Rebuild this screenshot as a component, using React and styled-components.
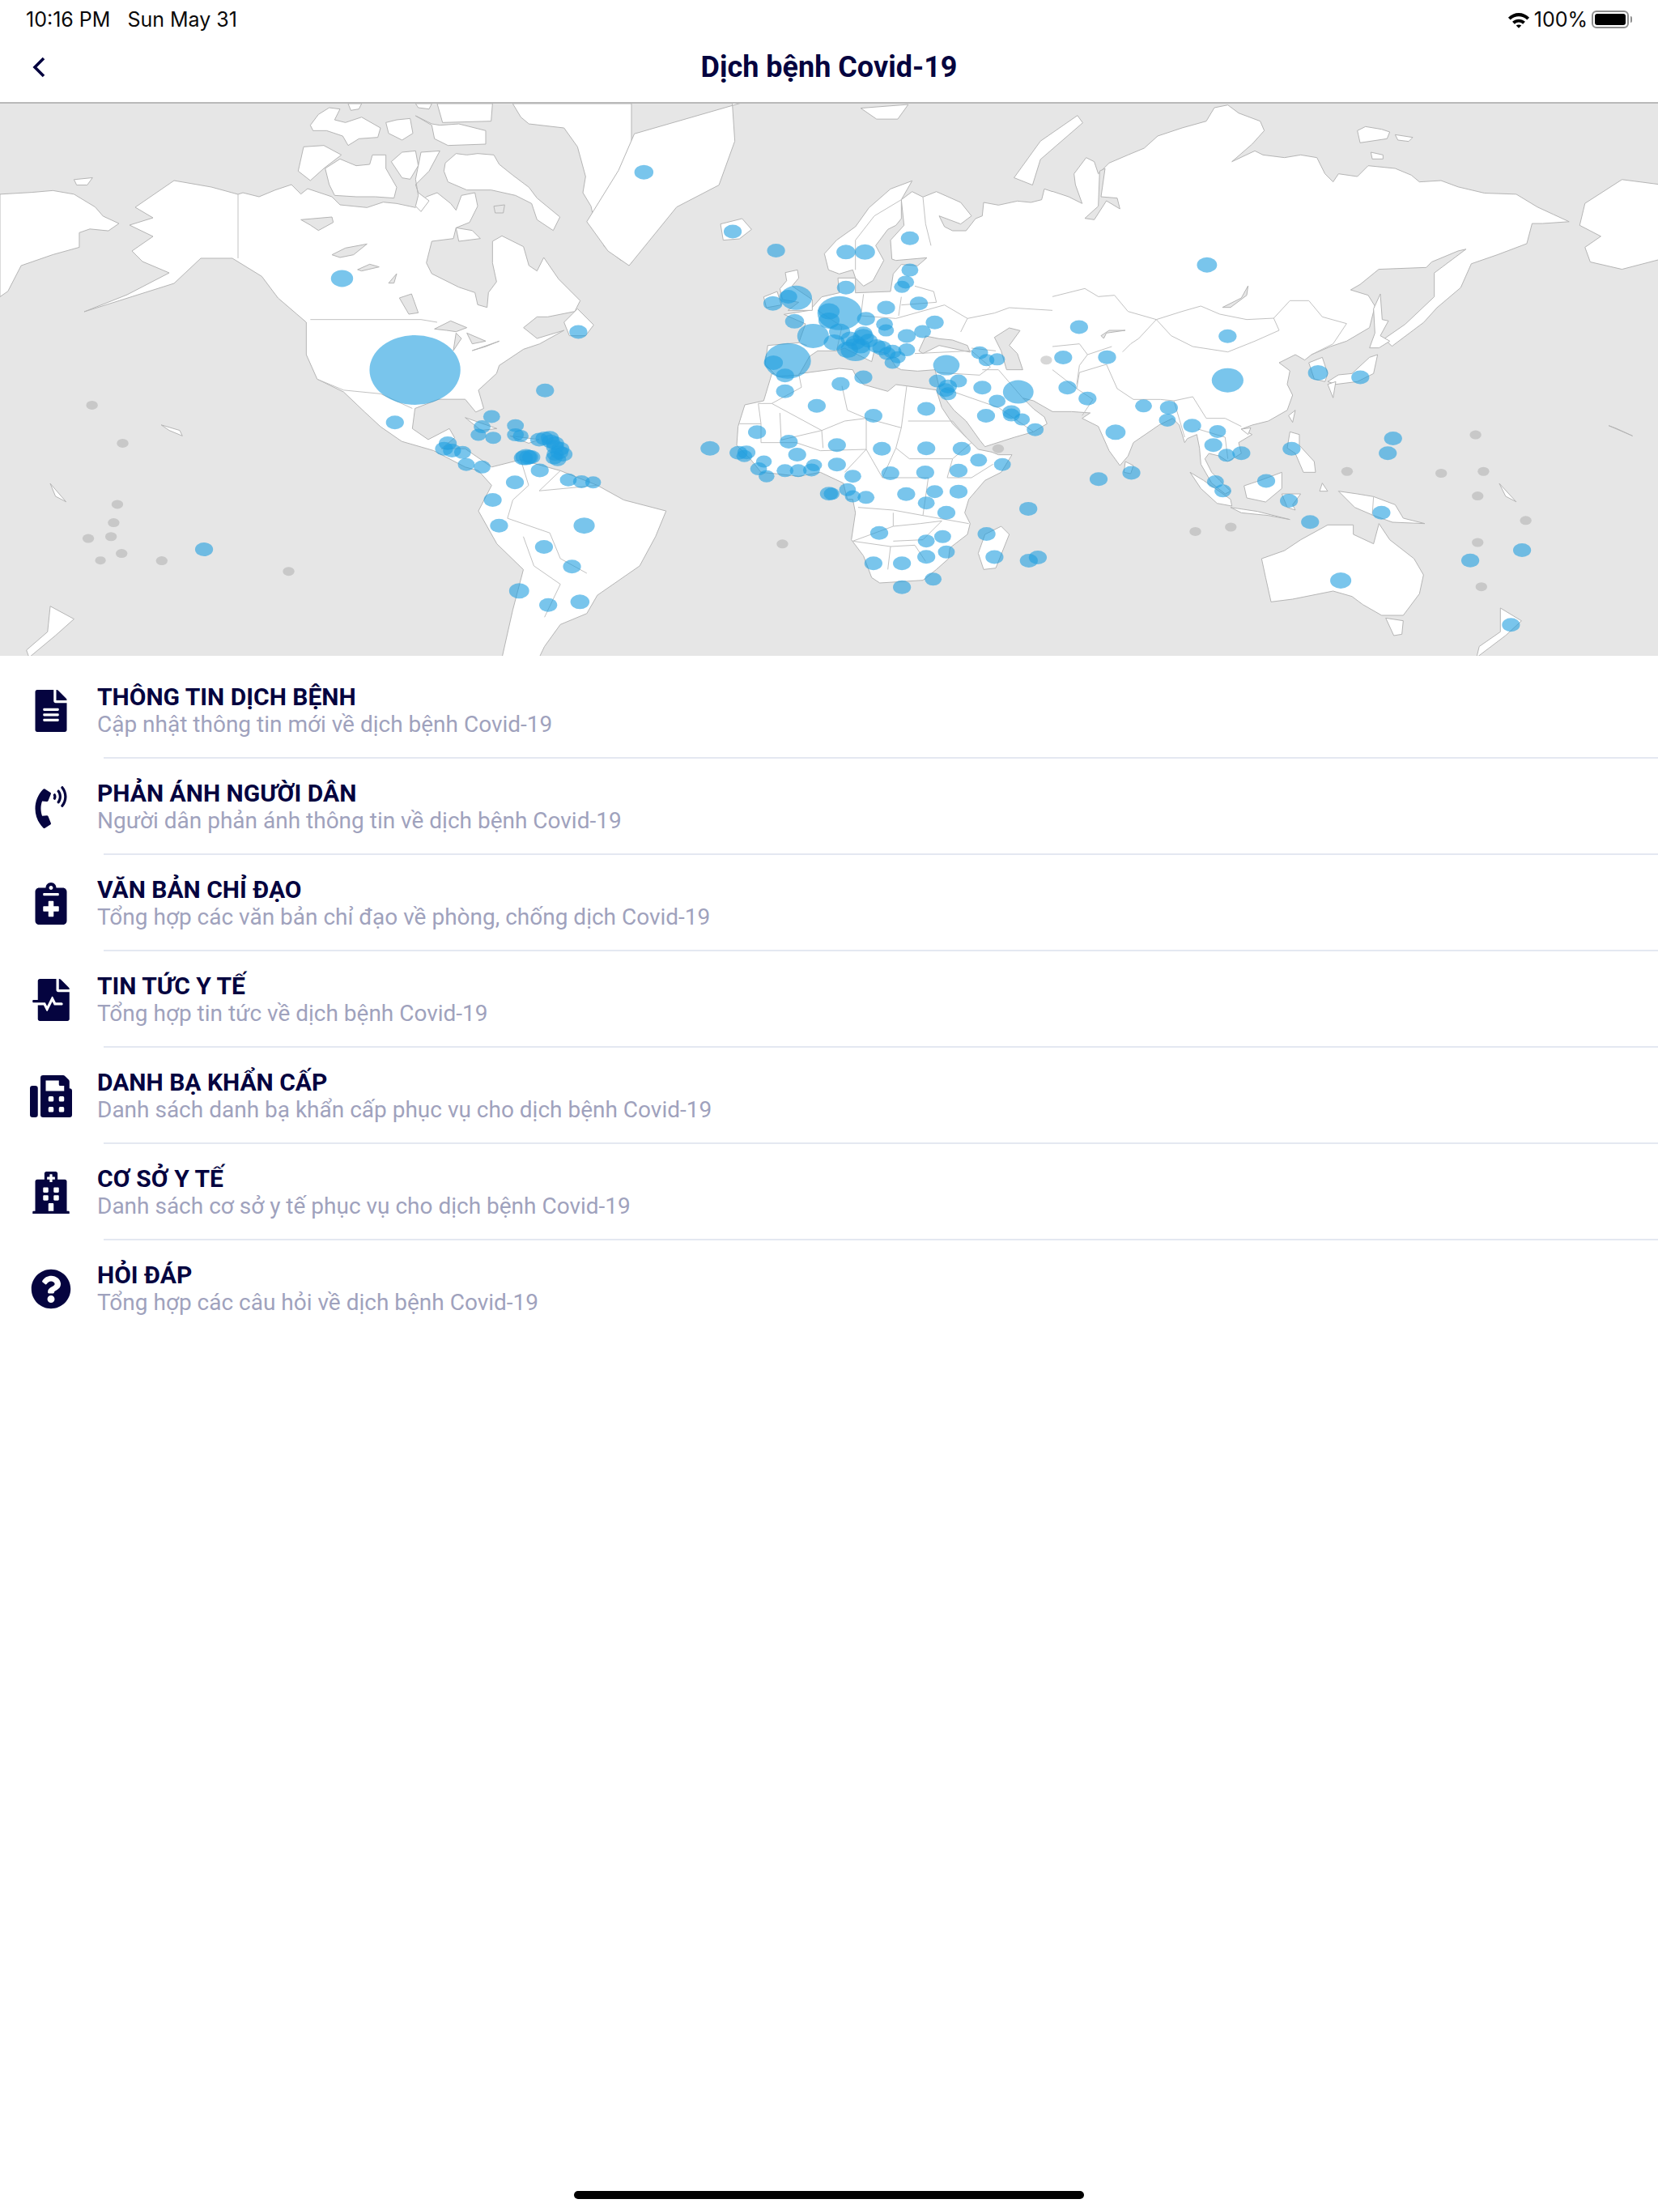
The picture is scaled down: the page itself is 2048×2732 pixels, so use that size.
import React from "react";
import styled, { createGlobalStyle } from "styled-components";
import {
  FaFileAlt,
  FaPhoneVolume,
  FaNotesMedical,
  FaFileMedicalAlt,
  FaFax,
  FaHospital,
  FaQuestionCircle,
} from "react-icons/fa";

const GlobalStyle = createGlobalStyle`
  html, body { margin: 0; padding: 0; background: #fff; }
`;

const Page = styled.div`
  width: 2048px;
  height: 2732px;
  display: flex;
  flex-direction: column;
  background: #fff;
  font-family: Roboto, "Noto Sans", sans-serif;
`;

const StatusBar = styled.div`
  height: 48px;
  padding: 0 36px 0 32px;
  display: flex;
  align-items: center;
  justify-content: space-between;
  font-family: Inter, "Liberation Sans", sans-serif;
  font-size: 25px;
  color: #0a0a0a;
`;

const StatusGroup = styled.div`
  display: flex;
  align-items: center;
  gap: ${(p) => p.$gap}px;
`;

const NavBar = styled.div`
  height: 70px;
  padding: 0 0 8px 40px;
  display: flex;
  align-items: center;
  position: relative;
  border-bottom: 2px solid #b9b9b9;
`;

const NavTitle = styled.div`
  position: absolute;
  left: 0;
  right: 0;
  top: 14px;
  text-align: center;
  font-size: 36px;
  font-weight: 700;
  color: #05043f;
`;

const MapSvg = styled.svg`
  display: block;
  width: 2048px;
  height: 682px;
  background: #e6e6e6;
`;

const Land = styled.polygon`
  fill: #fff;
  stroke: #b5b5b5;
  stroke-width: 1;
  stroke-linejoin: round;
`;

const Water = styled.polygon`
  fill: #e6e6e6;
  stroke: #b5b5b5;
  stroke-width: 1;
  stroke-linejoin: round;
`;

const Border = styled.polyline`
  fill: none;
  stroke: #c2c2c2;
  stroke-width: 1;
`;

const Dot = styled.ellipse`
  fill: ${(p) => (p.$muted ? "#9a9a9a" : "#1f9fe0")};
  opacity: ${(p) => (p.$muted ? 0.4 : 0.6)};
`;

const List = styled.div`
  padding-top: 8px;
`;

const Row = styled.div`
  height: 119px;
  box-sizing: border-box;
  display: flex;
  align-items: center;
  position: relative;
  padding-left: 37px;

  &:not(:last-child)::after {
    content: "";
    position: absolute;
    left: 128px;
    right: 0;
    bottom: 0;
    height: 2px;
    background: #e4e8f1;
  }
`;

const IconCell = styled.div`
  width: 52px;
  height: 52px;
  margin-right: 31px;
  flex: none;
  display: flex;
  align-items: center;
  justify-content: center;
  color: #05043f;
  font-size: ${(p) => p.$size || 52}px;
`;

const RowText = styled.div`
  display: flex;
  flex-direction: column;
`;

const RowTitle = styled.div`
  font-size: 30px;
  line-height: 35px;
  font-weight: 700;
  color: #05043f;
`;

const RowSub = styled.div`
  font-size: 28px;
  line-height: 34px;
  color: #9fa2bd;
`;

const HomeArea = styled.div`
  margin-top: auto;
  padding-bottom: 16px;
  display: flex;
  justify-content: center;
`;

const HomeBar = styled.div`
  width: 630px;
  height: 10px;
  border-radius: 5px;
  background: #000;
`;

const Battery = styled.div`
  width: 46px;
  height: 22px;
  box-sizing: border-box;
  border: 2px solid #8e8e8e;
  border-radius: 6px;
  padding: 2px;
  position: relative;

  &::before {
    content: "";
    display: block;
    height: 100%;
    background: #000;
    border-radius: 3px;
  }

  &::after {
    content: "";
    position: absolute;
    right: -6px;
    top: 5px;
    width: 2px;
    height: 8px;
    background: #8e8e8e;
    border-radius: 0 2px 2px 0;
  }
`;

const items = [
  { Icon: FaFileAlt, title: "THÔNG TIN DỊCH BỆNH", sub: "Cập nhật thông tin mới về dịch bệnh Covid-19" },
  { Icon: FaPhoneVolume, title: "PHẢN ÁNH NGƯỜI DÂN", sub: "Người dân phản ánh thông tin về dịch bệnh Covid-19" },
  { Icon: FaNotesMedical, title: "VĂN BẢN CHỈ ĐẠO", sub: "Tổng hợp các văn bản chỉ đạo về phòng, chống dịch Covid-19" },
  { Icon: FaFileMedicalAlt, title: "TIN TỨC Y TẾ", sub: "Tổng hợp tin tức về dịch bệnh Covid-19" },
  { Icon: FaFax, title: "DANH BẠ KHẨN CẤP", sub: "Danh sách danh bạ khẩn cấp phục vụ cho dịch bệnh Covid-19" },
  { Icon: FaHospital, title: "CƠ SỞ Y TẾ", sub: "Danh sách cơ sở y tế phục vụ cho dịch bệnh Covid-19" },
  { Icon: FaQuestionCircle, title: "HỎI ĐÁP", sub: "Tổng hợp các câu hỏi về dịch bệnh Covid-19", size: 50 },
];

// helpers: shapes were traced in different scaled views, all turned into page px here
const toPts = (s, fn) =>
  s.trim().split(/\s+/).map((p) => {
    const [x, y] = p.split(",").map(Number);
    return fn(x, y).join(",");
  }).join(" ");
const at = (ox, oy) => (s) => toPts(s, (x, y) => [ox + x / 3, oy + y / 3]);
const west = (s) => toPts(s, (x, y) => [x * 0.653, 120 + y * 0.4523]);
const east = (s) => toPts(s, (x, y) => [1024 + x * 0.653, 120 + y * 0.4523]);
const na = at(300, 128);
const eu = at(900, 170);
const af = at(900, 420);
const ru = at(1300, 128);
const as = at(1300, 450);

const land = [
  west("0,265 60,260 100,255 140,265 180,300 195,325 225,345 205,365 170,360 150,370 150,410 100,430 40,460 15,530 0,545"),
  // the americas in one outline
  [
    na("0,330 60,345 120,320 180,300 215,335 240,315 330,345 360,375 460,385 520,365 570,370 640,385 680,345 720,330 770,370 790,395 810,340 860,330 870,380 840,440 790,460 780,500 700,510 680,590 700,630 800,680 860,700 870,745 905,755 910,700 940,660 925,590 925,510 960,490 1040,530 1060,600 1090,620 1115,570 1170,650 1250,730 1230,770 1130,790 1090,790 1040,830 1090,870 1190,840 1100,890 1040,910 950,970 940,1000"),
    west("905,800 915,850 900,860 880,825 830,825 785,850 780,905 810,935 850,905 860,930 835,960 880,960 930,1010 985,990 1060,1020 1130,1060 1180,1100 1260,1130 1240,1200 1210,1280 1130,1360 1110,1410 1060,1440 1030,1500 1010,1560 945,1560 970,1400 990,1290 940,1220 905,1130 930,1060 905,1020 880,1010 820,965 760,940 720,900 690,860 650,805 600,770"),
    na("235,930 235,810 200,780 130,720 70,640 -39,573 -156,573 -255,666 -588,771 -429,708 -273,627 -372,585 -411,546 -333,492 -420,450 -333,423 -399,384 -255,285 -117,309 -18,336"),
  ].join(" "),
  // canadian arctic
  na("225,160 300,155 365,190 300,240 250,285 205,250"),
  na("305,240 360,205 420,230 470,225 480,190 530,190 530,240 570,310 560,350 490,345 420,345 340,340 320,300"),
  na("550,215 590,180 640,175 650,230 620,280 590,275"),
  na("660,180 730,175 690,250 640,300 650,330 690,360 660,400 640,380 650,340 640,280"),
  na("750,220 790,185 830,190 870,185 930,190 950,225 1000,265 1060,310 1090,350 1175,420 1150,470 1090,430 1070,370 1010,340 920,320 830,320 760,290 745,250"),
  na("250,80 280,40 320,15 360,20 340,60 380,70 440,50 510,90 500,125 430,130 390,155 370,120 310,100 260,100"),
  na("530,70 570,60 620,55 630,110 590,135 540,110"),
  na("640,45 700,75 730,80 800,75 900,100 900,150 760,155 710,130 700,80"),
  na("390,0 440,0 430,20 400,25"),
  na("640,0 700,0 690,20 650,15"),
  na("720,0 925,0 920,65 740,70"),
  na("790,460 850,470 880,500 800,510"),
  na("1190,810 1240,760 1300,820 1270,860 1210,860"),
  // greenland, iceland and the pacific bits
  na("1000,0 1440,0 1440,590 1400,580 1340,530 1310,470 1290,380 1260,330 1270,270 1240,160 1190,90 1060,75 1030,50"),
  west("1440,0 1385,12 1390,120 1360,240 1280,300 1190,460 1150,420 1110,340 1170,200 1200,100"),
  eu("-30,320 50,300 85,340 40,375 -20,380"),
  west("95,1390 140,1425 105,1470 55,1530 50,1510 90,1460"),
  west("140,225 175,220 165,240 145,240"),
  west("880,875 940,905 910,910"),
  west("965,925 1020,935 1000,945"),
  west("305,895 340,910 345,925 320,910"),
  west("95,1055 125,1105 105,1090"),
  // africa
  af("160,125 260,125 410,105 460,110 470,130 500,165 590,190 620,165 660,170 770,185 790,250 830,310 880,360 925,405 975,415 1000,425 1050,425 1010,490 950,520 890,590 875,640 895,680 885,720 820,770 815,810 770,850 720,890 560,900 530,880 500,800 455,740 470,640 460,590 440,590 425,530 340,490 260,505 175,495 120,490 80,440 30,390 35,320 60,240 130,225"),
  af("1010,690 1040,720 990,845 945,850 925,790 950,720"),
  // eurasia in one outline
  [
    eu("180,885 135,840 145,770 260,760 285,690 205,655 300,640 345,590 410,575 405,520 470,520 470,575 600,570 610,505 640,470 700,475 735,445 620,455 605,450 600,380 650,325 640,230 680,200 720,220 770,200 860,240 900,290 860,320 780,290 800,330 830,345 880,345 915,300 940,290 945,240 1000,250 1070,235 1120,240 1160,230 1170,190 1200,200"),
    ru("0,325 60,345 110,370 85,300 80,260 125,200 155,215 170,260 210,220 280,190 340,165 390,120 480,90 570,65 600,15 650,5 690,35 770,65 785,100 740,150 665,215 750,175 780,190 860,200 920,190 980,200 1010,260 1040,290 1060,260 1130,270 1170,230 1270,240 1330,265 1360,290 1440,285"),
    east("1190,245 1240,262 1300,265 1340,300 1370,320 1400,340 1350,345 1330,345 1320,400 1265,430 1215,455 1195,520 1150,575 1125,615 1065,680 1050,660 1090,620 1145,545 1145,480 1205,415 1190,420 1140,450 1130,465 1040,470"),
    ru("1140,670 1105,690 1170,710 1195,750 1175,830 1090,880 1030,900 960,930 935,950 900,930 840,960 880,990 870,1040 890,1080"),
    as("870,170 800,210 740,225 700,240 740,260 690,290 700,330 650,360 620,340 580,330 565,350 590,400 620,430 660,470 640,480 590,440 550,370 545,310 535,260 500,275 490,290 470,225 445,200 395,225 300,290 280,340 250,375 210,320 170,230 110,200 140,180 70,175 0,175"),
    af("1130,225 1090,215 1130,255 1170,285 1180,310 1130,340 1060,360 950,395 930,370 880,300 835,260 785,195 765,110 700,115 640,110"),
    eu("620,850 590,800 540,790 530,830 430,780 400,790 330,790 300,810 260,880"),
  ].join(" "),
  eu("355,430 400,380 470,330 520,260 600,190 680,160 640,230 640,300 620,325 590,340 545,400 575,455 535,530 500,550 470,520 460,490 410,505 370,490"),
  eu("210,500 255,490 260,520 235,550 310,600 310,640 220,640 260,610 200,600 190,560 215,530"),
  eu("130,590 180,570 195,620 140,630"),
  east("350,220 400,120 470,50 480,70 400,170 385,240"),
  east("60,30 150,20 130,60 90,60"),
  ru("1130,100 1160,85 1220,95 1250,105 1240,130 1140,145"),
  ru("1270,115 1335,125 1320,140 1280,135"),
  ru("1180,180 1225,190 1225,205 1185,205"),
  ru("950,960 1000,940 1020,1000 1010,1030 970,1020"),
  ru("1190,760 1215,705 1222,800 1245,805 1215,860 1250,880 1210,905 1175,905 1195,850"),
  ru("1175,940 1205,930 1190,1000 1130,1030 1050,1040 1020,1030 1060,1005 1110,1000"),
  ru("1020,1040 1050,1030 1040,1090"),
  // south east asia and oceania
  as("510,400 560,430 660,500 665,525 610,515 550,460"),
  as("660,530 760,545 880,575 800,560 700,550"),
  as("710,450 770,430 850,400 850,460 790,510 720,495"),
  as("850,480 920,480 890,520 900,540 870,530"),
  as("880,250 915,260 915,300 970,360 975,400 930,400 900,330 870,310"),
  as("1000,440 1020,470 990,470"),
  as("700,240 735,235 725,260"),
  as("875,190 900,170 890,215"),
  as("270,360 300,375 290,405 265,400"),
  as("1060,470 1130,480 1190,490 1270,520 1300,570 1380,590 1260,585 1190,560 1120,530"),
  as("775,720 860,690 920,650 1020,595 1115,595 1115,630 1190,665 1210,590 1250,650 1340,720 1375,780 1360,850 1300,930 1220,930 1150,890 1110,860 1040,840 890,870 810,880 790,790"),
  as("1235,940 1300,950 1295,1000 1265,1005"),
  east("1270,1395 1310,1430 1280,1470 1225,1530 1230,1500 1270,1460"),
  east("1475,897 1520,925 1490,905"),
  east("1268,1055 1300,1105 1280,1090"),
  east("1430,290 1500,225 1580,240 1580,440 1500,470 1440,450 1430,410 1460,380 1420,350"),
];

const water = [
  na("215,430 330,420 335,440 280,470 250,450"),
  na("330,560 380,535 460,520 410,560 360,570"),
  na("425,615 470,595 505,605 440,620"),
  na("540,665 570,630 560,665"),
  na("580,720 625,705 650,775 615,780"),
  na("710,835 770,805 830,830 790,845 755,840"),
  na("790,850 810,870 780,915"),
  na("830,850 900,880 850,890"),
  na("850,915 950,880 900,900"),
  na("930,380 970,375 965,405 935,405"),
  eu("705,790 730,735 780,745 830,750 885,770 895,795 780,770 720,800"),
  eu("985,740 1040,705 1080,715 1040,770 1070,800 1090,860 1030,860 1010,790"),
  ru("175,250 195,240 180,345 240,350 250,390 200,360 155,430 120,425 170,380"),
  ru("630,755 700,720 725,675 720,710 660,755"),
  ru("180,860 210,840 270,840 200,850 190,870"),
];

const borders = [
  // north america
  na("-18,336 -18,573"),
  na("250,800 660,800 720,810"),
  west("600,770 650,800 720,810 780,850"),
  // south america
  west("985,990 1000,1060 970,1100 960,1150 1040,1190 1060,1260 1110,1300"),
  west("1060,1020 1020,1075 1130,1060"),
  west("990,1200 1010,1280 1060,1330 1030,1420"),
  // africa
  af("260,125 270,175 160,235 345,335 430,300 510,290 640,325 660,170"),
  af("420,170 440,260 510,290"),
  af("40,310 120,310 110,235 160,235"),
  af("190,270 195,370 345,335 350,400"),
  af("120,310 120,380 250,380 340,410 510,405 510,290"),
  af("510,405 430,490"),
  af("640,325 620,400 670,440 830,440 900,380"),
  af("665,300 830,300 880,360"),
  af("510,405 570,510 740,510 720,650 610,630 480,620"),
  af("620,400 570,510"),
  af("830,440 810,510 900,510 980,460"),
  af("720,650 890,680"),
  af("610,640 610,690 460,745"),
  af("610,690 710,680 790,670 720,740 610,745"),
  af("460,745 600,765 590,850"),
  af("600,765 690,760 730,820"),
  // europe
  eu("470,490 470,380 540,290 640,230"),
  eu("720,220 730,320 750,400"),
  eu("640,590 630,660"),
  eu("640,620 770,610 760,570 690,550"),
  eu("620,670 800,620 885,670 860,720"),
  eu("260,760 290,770"),
  eu("330,640 420,700 400,790"),
  eu("500,580 490,660 620,670"),
  eu("885,670 985,650 1040,630 1200,640"),
  eu("900,780 990,790"),
  eu("690,800 900,790 970,850 930,880 770,870"),
  // asia
  ru("0,715 120,685 170,715 230,710 280,770 385,800 320,870 290,890 260,920"),
  ru("385,800 480,770 550,750 620,780 720,800 820,795 880,730 950,730 1000,790 1090,815 1040,890 960,930"),
  ru("385,800 440,860 520,900 650,920 750,880 840,840 820,795"),
  ru("0,900 100,890 130,930 220,900"),
  ru("130,930 100,970 90,1040"),
  as("0,20 90,90 150,130 110,190"),
  as("200,0 240,90 300,130 400,130 450,135 520,120 570,200 640,200 700,230"),
  as("450,135 490,270"),
  as("540,240 640,270 650,350"),
  as("1190,490 1185,560"),
  as("200,0 100,30 90,90"),
  af("1090,215 1000,110 940,110"),
  af("800,180 1000,250 1130,340"),
];

const westDots = [
  [1218,205,18],[1386,367,17],[1468,419,17],[647,495,21],[1094,641,17],[785,745,86],[1031,801,17],[747,888,17],
  [930,872,16],[912,900,16],[905,922,15],[933,930,15],[975,897,16],[975,922,16],[985,925,15],[1020,935,17],[1040,930,17],[1050,945,17],[1060,960,17],[1065,975,18],[1055,990,16],[1050,975,16],[995,983,20],[1000,983,18],
  [1030,932,17],[1042,940,17],[1050,955,17],[1058,970,17],[1048,985,16],[990,985,18],[1005,983,17],
  [847,945,17],[840,960,17],[855,965,17],[875,970,16],[882,1003,16],[912,1010,16],
  [1021,1019,17],[974,1052,17],[932,1100,17],[944,1170,17],[1105,1170,20],[1029,1228,17],[1082,1282,17],[982,1348,19],[1037,1387,17],[1097,1378,18],[1075,1045,16],[1100,1050,16],[1122,1052,15],
  [386,1235,17],
  [1506,548,30],[1491,545,17],[1462,563,18],[1503,612,18],[1538,652,30],[1490,720,44],[1463,725,18],[1485,760,17],[1485,803,17],[1545,843,17],[1432,915,17],[1492,941,17],[1343,959,18],[1397,971,17],[1412,970,17],[1408,980,15],[1445,995,15],[1435,1015,16],[1450,1035,15],[1508,976,17],[1485,1020,16],[1510,1020,16],[1535,1018,16],[1540,1005,15],[1568,1083,17],
];

const westMuted = [
  [174,841,11],[232,945,11],[222,1112,11],[215,1162,11],[210,1200,11],[167,1205,11],[230,1246,11],[190,1265,10],[306,1266,11],[546,1295,11],[1480,1220,11],
];

const eastDots = [
  [153,385,17],[32,423,18],[68,423,19],[153,472,16],[145,505,16],[138,518,15],[32,520,17],[20,590,42],[0,585,20],[170,563,17],[108,575,17],[200,615,17],[70,605,17],[105,620,16],[108,637,15],[147,652,17],[177,640,16],[65,655,20],[50,690,28],[20,640,20],[0,610,20],[10,670,20],[40,660,18],[60,680,18],[100,685,18],[120,695,17],[147,690,16],[120,725,15],[65,765,17],[22,783,17],[222,732,25],[285,698,16],[298,718,15],[318,716,15],[205,775,16],[245,775,16],[225,790,17],[225,810,16],[290,793,17],[358,805,29],[318,830,16],[345,860,17],[365,880,15],[390,908,16],[297,870,17],[184,851,17],[84,870,17],
  [65,645,17],[75,665,17],[50,670,18],[35,690,20],[90,680,17],[110,700,16],[130,710,15],[220,800,17],[345,868,16],
  [473,628,17],[443,711,17],[526,710,17],[451,793,17],[489,823,17],[715,458,19],[754,653,17],[754,773,30],[925,753,19],[1005,765,17],[595,843,16],[643,848,17],[640,882,16],[687,897,17],[542,915,19],[735,913,16],[727,950,17],[752,978,16],[780,972,17],[875,960,17],[1067,932,17],[1057,972,17],[572,1026,17],[510,1043,17],[731,1050,16],[745,1075,16],[827,1048,17],[870,1102,17],[910,1160,17],[1045,1135,17],[377,1124,17],[298,1193,17],[313,1256,17],[395,1257,17],[378,1266,17],[968,1320,20],[1290,1441,17],[1213,1265,17],[1311,1237,17],
  [15,950,17],[100,960,17],[184,959,17],[251,960,17],[283,991,16],[328,1003,16],[15,1003,17],[45,1035,16],[116,1027,17],[182,1025,17],[245,1020,17],[35,1072,16],[5,1083,15],[45,1090,15],[70,1093,16],[146,1084,17],[200,1077,16],[184,1108,16],[245,1077,17],[222,1135,17],[95,1190,17],[184,1212,16],[215,1200,16],[222,1242,16],[184,1255,17],[84,1273,17],[138,1273,17],[138,1338,17],[197,1316,16],
];

const eastMuted = [
  [1223,922,11],[980,1022,11],[1158,1027,11],[1238,1022,11],[1227,1089,11],[1318,1156,11],[760,1174,11],[693,1186,11],[1227,1216,11],[1234,1337,11],[411,718,11],[320,960,11],
];

const dotProps = (offset) => ([x, y, r]) => ({
  cx: offset + x * 0.653,
  cy: 120 + y * 0.4523,
  rx: r * 0.653,
  ry: r * 0.5,
});

const WorldMap = () => (
  <MapSvg viewBox="0 128 2048 682">
    {land.map((p, i) => <Land key={i} points={p} />)}
    {water.map((p, i) => <Water key={i} points={p} />)}
    {borders.map((p, i) => <Border key={i} points={p} />)}
    {westMuted.map((d, i) => <Dot key={i} $muted {...dotProps(0)(d)} />)}
    {eastMuted.map((d, i) => <Dot key={i} $muted {...dotProps(1024)(d)} />)}
    {westDots.map((d, i) => <Dot key={i} {...dotProps(0)(d)} />)}
    {eastDots.map((d, i) => <Dot key={i} {...dotProps(1024)(d)} />)}
  </MapSvg>
);

export default function App() {
  return (
    <Page>
      <GlobalStyle />
      <StatusBar>
        <StatusGroup $gap={21}>
          <span>10:16 PM</span>
          <span>Sun May 31</span>
        </StatusGroup>
        <StatusGroup $gap={5}>
          <svg width="28" height="21" viewBox="0 0 30 22">
            <path d="M1 8 C9 0 21 0 29 8 L26 11 C19.5 5 10.5 5 4 11 Z" fill="#000" />
            <path d="M6.5 13.5 C11.5 9 18.5 9 23.5 13.5 L20.5 16.5 C17 13.5 13 13.5 9.5 16.5 Z" fill="#000" />
            <path d="M11.5 18.5 C13.5 17 16.5 17 18.5 18.5 L15 22 Z" fill="#000" />
          </svg>
          <span>100%</span>
          <Battery />
        </StatusGroup>
      </StatusBar>
      <NavBar>
        <svg width="16" height="26" viewBox="0 0 16 26">
          <polyline points="14,2 3,13 14,24" fill="none" stroke="#05043f" strokeWidth="3.6" />
        </svg>
        <NavTitle>Dịch bệnh Covid-19</NavTitle>
      </NavBar>
      <WorldMap />
      <List>
        {items.map(({ Icon, title, sub, size }) => (
          <Row key={title}>
            <IconCell $size={size}><Icon /></IconCell>
            <RowText>
              <RowTitle>{title}</RowTitle>
              <RowSub>{sub}</RowSub>
            </RowText>
          </Row>
        ))}
      </List>
      <HomeArea><HomeBar /></HomeArea>
    </Page>
  );
}
